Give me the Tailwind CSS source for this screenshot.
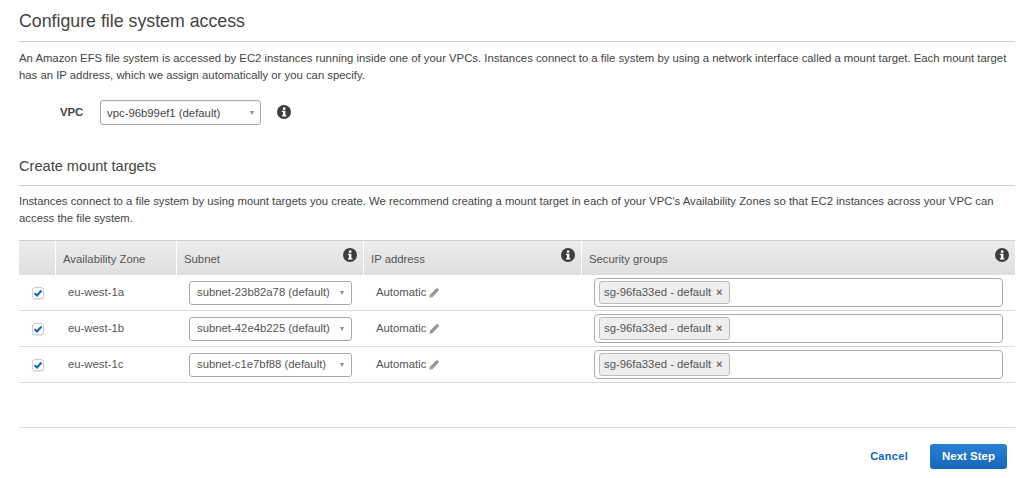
<!DOCTYPE html>
<html><head><meta charset="utf-8">
<script src="https://cdn.jsdelivr.net/npm/@tailwindcss/browser@4"></script>
</head>
<body class="bg-white overflow-hidden">
<div class="w-[1024px] h-[478px] pl-[19px] pr-[9px] font-['Liberation_Sans',Arial,sans-serif] text-[#444] text-[11.33px] leading-[17px]">
  <h1 class="h-[42px] pt-[11px] text-[17.75px] leading-[21px] text-[#444] border-b border-[#ccc]">Configure file system access</h1>
  <p class="mt-[8px] h-[34px] whitespace-nowrap text-[#444]">An Amazon EFS file system is accessed by EC2 instances running inside one of your VPCs. Instances connect to a file system by using a network interface called a mount target. Each mount target<br>has an IP address, which we assign automatically or you can specify.</p>
  <div class="mt-[16px] h-[25px] flex items-center">
    <span class="w-[81px] pl-[41px] font-bold">VPC</span>
    <div class="w-[161px] h-[25px] border border-[#aaa] rounded-[3px] flex items-center justify-between pl-[6px] pr-[6px] shadow-[inset_0_1px_1px_rgba(0,0,0,0.06)]">
      <span class="pt-[1px]">vpc-96b99ef1 (default)</span><span class="w-0 h-0 border-x-[2.5px] border-x-transparent border-t-[4px] border-t-[#888]"></span>
    </div>
    <svg class="ml-[16px] -mt-[1px] w-[14px] h-[14px]" viewBox="0 0 14 14"><circle cx="7" cy="7" r="7" fill="#3d3d3d"/><rect x="5.9" y="2.4" width="2.5" height="2.4" fill="#fff"/><path d="M4.9 5.8h3.5v4.5h1v1.3H4.9v-1.3h1V7.1h-1z" fill="#fff"/></svg>
  </div>
  <h2 class="mt-[31px] h-[30px] text-[14.6px] leading-[20px] border-b border-[#ccc]">Create mount targets</h2>
  <p class="mt-[7px] h-[34px] whitespace-nowrap">Instances connect to a file system by using mount targets you create. We recommend creating a mount target in each of your VPC's Availability Zones so that EC2 instances across your VPC can<br>access the file system.</p>
  <div class="mt-[13px] w-[996px]">
    <div class="h-[35px] flex bg-gradient-to-b from-[#ececec] to-[#dfdfdf] border-t border-[#d0d0d0] text-[#555]">
      <div class="w-[37px] border-r border-white"></div>
      <div class="w-[121px] pl-[7px] pt-[10px] border-r border-white">Availability Zone</div>
      <div class="w-[187px] pl-[7px] pt-[10px] pr-[6px] border-r border-white flex justify-between items-start"><span>Subnet</span><svg class="-mt-[3px] w-[14px] h-[14px]" viewBox="0 0 14 14"><circle cx="7" cy="7" r="7" fill="#3d3d3d"/><rect x="5.9" y="2.4" width="2.5" height="2.4" fill="#fff"/><path d="M4.9 5.8h3.5v4.5h1v1.3H4.9v-1.3h1V7.1h-1z" fill="#fff"/></svg></div>
      <div class="w-[218px] pl-[7px] pt-[10px] pr-[6px] border-r border-white flex justify-between items-start"><span>IP address</span><svg class="-mt-[3px] w-[14px] h-[14px]" viewBox="0 0 14 14"><circle cx="7" cy="7" r="7" fill="#3d3d3d"/><rect x="5.9" y="2.4" width="2.5" height="2.4" fill="#fff"/><path d="M4.9 5.8h3.5v4.5h1v1.3H4.9v-1.3h1V7.1h-1z" fill="#fff"/></svg></div>
      <div class="flex-1 pl-[7px] pt-[10px] pr-[6px] flex justify-between items-start"><span>Security groups</span><svg class="-mt-[3px] w-[14px] h-[14px]" viewBox="0 0 14 14"><circle cx="7" cy="7" r="7" fill="#3d3d3d"/><rect x="5.9" y="2.4" width="2.5" height="2.4" fill="#fff"/><path d="M4.9 5.8h3.5v4.5h1v1.3H4.9v-1.3h1V7.1h-1z" fill="#fff"/></svg></div>
    </div>
    <div class="h-[36px] flex items-center border-b border-[#ddd] text-[#555]">
      <div class="w-[37px] pl-[13px]"><span class="w-[12px] h-[12px] rounded-[3px] border border-[#ccc] bg-white flex items-center justify-center shadow-[0_1px_1px_rgba(0,0,0,0.1)]"><svg class="w-[10px] h-[10px]" viewBox="0 0 10 10"><path d="M1.5 5.2 4 7.5 8.5 2.5" fill="none" stroke="#1166bb" stroke-width="2"/></svg></span></div>
      <div class="w-[133px] pl-[12px]">eu-west-1a</div>
      <div class="w-[175px]"><div class="w-[163px] h-[24px] border border-[#aaa] rounded-[3px] flex items-center justify-between pl-[7px] pr-[7px]"><span>subnet-23b82a78 (default)</span><span class="w-0 h-0 border-x-[2.5px] border-x-transparent border-t-[4px] border-t-[#888]"></span></div></div>
      <div class="w-[218px] pl-[12px] flex items-center gap-[3px]"><span>Automatic</span><svg class="w-[11px] h-[11px]" viewBox="0 0 10 10"><path d="M7.2.6l2.2 2.2-6.2 6.2L.3 9.7 1 6.8z" fill="#999"/></svg></div>
      <div class="flex-1 pl-[12px] pr-[12px]"><div class="h-[29px] border border-[#aaa] rounded-[4px] flex items-center pl-[4px]"><span class="h-[23px] pl-[4px] pr-[6px] flex items-center gap-[5px] bg-[#eee] border border-[#bbb] rounded-[3px]">sg-96fa33ed - default <span class="text-[11px] font-bold text-[#666]">×</span></span></div></div>
    </div>
    <div class="h-[36px] flex items-center border-b border-[#ddd] text-[#555]">
      <div class="w-[37px] pl-[13px]"><span class="w-[12px] h-[12px] rounded-[3px] border border-[#ccc] bg-white flex items-center justify-center shadow-[0_1px_1px_rgba(0,0,0,0.1)]"><svg class="w-[10px] h-[10px]" viewBox="0 0 10 10"><path d="M1.5 5.2 4 7.5 8.5 2.5" fill="none" stroke="#1166bb" stroke-width="2"/></svg></span></div>
      <div class="w-[133px] pl-[12px]">eu-west-1b</div>
      <div class="w-[175px]"><div class="w-[163px] h-[24px] border border-[#aaa] rounded-[3px] flex items-center justify-between pl-[7px] pr-[7px]"><span>subnet-42e4b225 (default)</span><span class="w-0 h-0 border-x-[2.5px] border-x-transparent border-t-[4px] border-t-[#888]"></span></div></div>
      <div class="w-[218px] pl-[12px] flex items-center gap-[3px]"><span>Automatic</span><svg class="w-[11px] h-[11px]" viewBox="0 0 10 10"><path d="M7.2.6l2.2 2.2-6.2 6.2L.3 9.7 1 6.8z" fill="#999"/></svg></div>
      <div class="flex-1 pl-[12px] pr-[12px]"><div class="h-[29px] border border-[#aaa] rounded-[4px] flex items-center pl-[4px]"><span class="h-[23px] pl-[4px] pr-[6px] flex items-center gap-[5px] bg-[#eee] border border-[#bbb] rounded-[3px]">sg-96fa33ed - default <span class="text-[11px] font-bold text-[#666]">×</span></span></div></div>
    </div>
    <div class="h-[36px] flex items-center border-b border-[#ddd] text-[#555]">
      <div class="w-[37px] pl-[13px]"><span class="w-[12px] h-[12px] rounded-[3px] border border-[#ccc] bg-white flex items-center justify-center shadow-[0_1px_1px_rgba(0,0,0,0.1)]"><svg class="w-[10px] h-[10px]" viewBox="0 0 10 10"><path d="M1.5 5.2 4 7.5 8.5 2.5" fill="none" stroke="#1166bb" stroke-width="2"/></svg></span></div>
      <div class="w-[133px] pl-[12px]">eu-west-1c</div>
      <div class="w-[175px]"><div class="w-[163px] h-[24px] border border-[#aaa] rounded-[3px] flex items-center justify-between pl-[7px] pr-[7px]"><span>subnet-c1e7bf88 (default)</span><span class="w-0 h-0 border-x-[2.5px] border-x-transparent border-t-[4px] border-t-[#888]"></span></div></div>
      <div class="w-[218px] pl-[12px] flex items-center gap-[3px]"><span>Automatic</span><svg class="w-[11px] h-[11px]" viewBox="0 0 10 10"><path d="M7.2.6l2.2 2.2-6.2 6.2L.3 9.7 1 6.8z" fill="#999"/></svg></div>
      <div class="flex-1 pl-[12px] pr-[12px]"><div class="h-[29px] border border-[#aaa] rounded-[4px] flex items-center pl-[4px]"><span class="h-[23px] pl-[4px] pr-[6px] flex items-center gap-[5px] bg-[#eee] border border-[#bbb] rounded-[3px]">sg-96fa33ed - default <span class="text-[11px] font-bold text-[#666]">×</span></span></div></div>
    </div>
  </div>
  <div class="mt-[44px] w-[996px] border-t border-[#ddd] pt-[16px] pr-[8px] flex justify-end items-center">
    <span class="font-bold text-[#1166bb] text-[11px] tracking-[0.3px]">Cancel</span>
    <span class="ml-[22px] w-[77px] h-[25px] rounded-[3px] bg-gradient-to-b from-[#2a80d5] to-[#1767b8] text-white font-bold text-[11.5px] flex items-center justify-center">Next Step</span>
  </div>
</div>
</body></html>
